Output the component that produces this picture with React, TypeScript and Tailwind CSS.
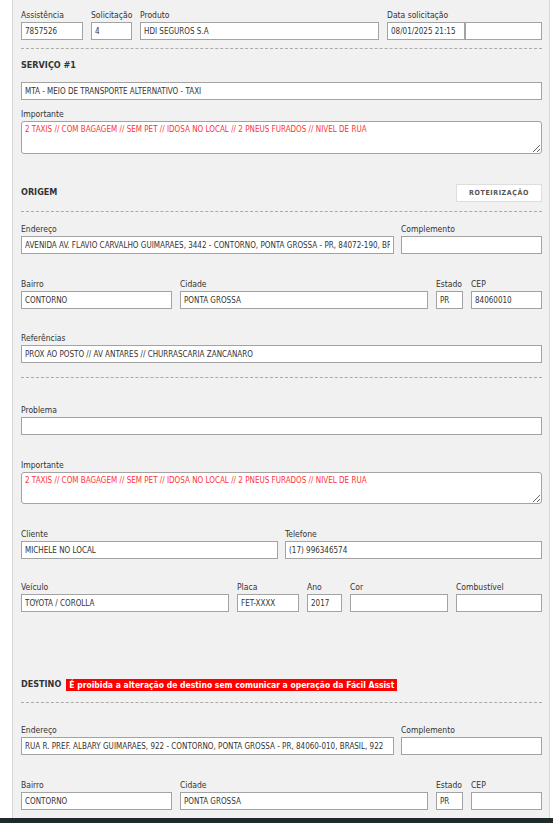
import React from 'react';

type FieldProps = {
  label: string;
  value?: string;
  className?: string;
};

const Field = ({ label, value = '', className = '' }: FieldProps) => (
  <div className={className}>
    <div className="mb-px whitespace-nowrap text-[8.5px] leading-[11px] text-[#333]">{label}</div>
    <input
      readOnly
      value={value}
      className="block h-[18px] w-full min-w-0 border border-[#a3a3a3] bg-white px-[3px] text-[8px] text-[#333] outline-none"
    />
  </div>
);

const Note = ({ text, boxClass }: { text: string; boxClass: string }) => (
  <div>
    <div className="mb-px text-[8.5px] leading-[11px] text-[#333]">Importante</div>
    <textarea readOnly value={text} className={boxClass} />
  </div>
);

const Dashed = ({ className }: { className: string }) => (
  <div className={className}>
    <div className="border-t border-dashed border-[#aaaaaa]" />
  </div>
);

const notes = '2 TAXIS // COM BAGAGEM // SEM PET // IDOSA NO LOCAL // 2 PNEUS FURADOS // NIVEL DE RUA';

export default function App() {
  return (
    <div className="min-h-screen bg-white font-['DejaVu_Sans_Condensed','DejaVu_Sans',sans-serif]">
      <div className="ml-[12px] w-[538px] border-x border-[#d6d6d6] bg-[#f1f1f1] pb-[8px] pl-[8px] pr-[7px] pt-[10px]">
        {/* cabeçalho */}
        <div className="flex gap-[8px]">
          <Field label="Assistência" value="7857526" className="w-[62px]" />
          <Field label="Solicitação" value="4" className="w-[41px]" />
          <Field label="Produto" value="HDI SEGUROS S.A" className="min-w-0 flex-1" />
          <div className="w-[155px]">
            <div className="mb-px text-[8.5px] leading-[11px] text-[#333]">Data solicitação</div>
            <div className="flex">
              <input readOnly value="08/01/2025 21:15" className="block h-[18px] w-[78px] min-w-0 border border-[#a3a3a3] bg-white px-[3px] text-[8px] text-[#333] outline-none" />
              <input readOnly value="" className="block h-[18px] w-0 min-w-0 flex-1 border border-[#a3a3a3] bg-white px-[3px] text-[8px] text-[#333] outline-none" />
            </div>
          </div>
        </div>

        <Dashed className="mt-[8px]" />

        {/* serviço */}
        <div className="mt-[11px] text-[9px] font-bold leading-[11px] text-[#333]">SERVIÇO #1</div>
        <input
          readOnly
          value="MTA - MEIO DE TRANSPORTE ALTERNATIVO - TAXI"
          className="mt-[11px] block h-[18px] w-full border border-[#a3a3a3] bg-white px-[3px] text-[8px] text-[#333] outline-none"
        />
        <div className="mt-[9px]">
          <Note
            text={notes}
            boxClass="block h-[33px] w-full resize-y rounded-[3px] border border-[#a3a3a3] bg-white p-[3px] text-[8px] leading-[10px] text-[#ff3333] outline-none"
          />
        </div>

        {/* origem */}
        <div className="mt-[30px] flex h-[18px] items-center justify-between">
          <span className="text-[9px] font-bold text-[#333]">ORIGEM</span>
          <button className="h-[18px] w-[86px] border border-[#dddddd] bg-white text-[7px] font-bold tracking-[0.6px] text-[#555]">
            ROTEIRIZAÇÃO
          </button>
        </div>

        <Dashed className="mt-[9px]" />

        <div className="mt-[12px] flex gap-[7px]">
          <Field
            label="Endereço"
            value="AVENIDA AV. FLAVIO CARVALHO GUIMARAES, 3442 - CONTORNO, PONTA GROSSA - PR, 84072-190, BRASIL, 3442"
            className="min-w-0 flex-1"
          />
          <Field label="Complemento" className="w-[141px]" />
        </div>

        <div className="mt-[25px] flex gap-[8px]">
          <Field label="Bairro" value="CONTORNO" className="w-[151px]" />
          <Field label="Cidade" value="PONTA GROSSA" className="min-w-0 flex-1" />
          <Field label="Estado" value="PR" className="w-[27px]" />
          <Field label="CEP" value="84060010" className="w-[71px]" />
        </div>

        <Field label="Referências" value="PROX AO POSTO // AV ANTARES // CHURRASCARIA ZANCANARO" className="mt-[24px]" />

        <Dashed className="mt-[14px]" />

        <Field label="Problema" className="mt-[27px]" />

        <div className="mt-[25px]">
          <Note
            text={notes}
            boxClass="block h-[32px] w-full resize-y rounded-[3px] border border-[#a3a3a3] bg-white p-[3px] text-[8px] leading-[10px] text-[#ff3333] outline-none"
          />
        </div>

        <div className="mt-[25px] grid grid-cols-2 gap-[7px]">
          <Field label="Cliente" value="MICHELE NO LOCAL" className="min-w-0" />
          <Field label="Telefone" value="(17) 996346574" className="min-w-0" />
        </div>

        <div className="mt-[23px] flex gap-[8px]">
          <Field label="Veículo" value="TOYOTA / COROLLA" className="w-[208px]" />
          <Field label="Placa" value="FET-XXXX" className="w-[62px]" />
          <Field label="Ano" value="2017" className="w-[35px]" />
          <Field label="Cor" className="w-[98px]" />
          <Field label="Combustível" className="min-w-0 flex-1" />
        </div>

        {/* destino */}
        <div className="mt-[67px] flex h-[12px] items-center gap-[5px]">
          <span className="text-[9px] font-bold text-[#333]">DESTINO</span>
          <span className="bg-[#ff0000] px-[3px] text-[8.5px] font-bold leading-[12px] text-white">
            É proibida a alteração de destino sem comunicar a operação da Fácil Assist
          </span>
        </div>

        <Dashed className="mt-[11px]" />

        <div className="mt-[22px] flex gap-[7px]">
          <Field
            label="Endereço"
            value="RUA R. PREF. ALBARY GUIMARAES, 922 - CONTORNO, PONTA GROSSA - PR, 84060-010, BRASIL, 922"
            className="min-w-0 flex-1"
          />
          <Field label="Complemento" className="w-[141px]" />
        </div>

        <div className="mt-[25px] flex gap-[8px]">
          <Field label="Bairro" value="CONTORNO" className="w-[151px]" />
          <Field label="Cidade" value="PONTA GROSSA" className="min-w-0 flex-1" />
          <Field label="Estado" value="PR" className="w-[27px]" />
          <Field label="CEP" className="w-[71px]" />
        </div>
      </div>
      <div className="h-[20px] bg-[#1f2a2b]" />
    </div>
  );
}
